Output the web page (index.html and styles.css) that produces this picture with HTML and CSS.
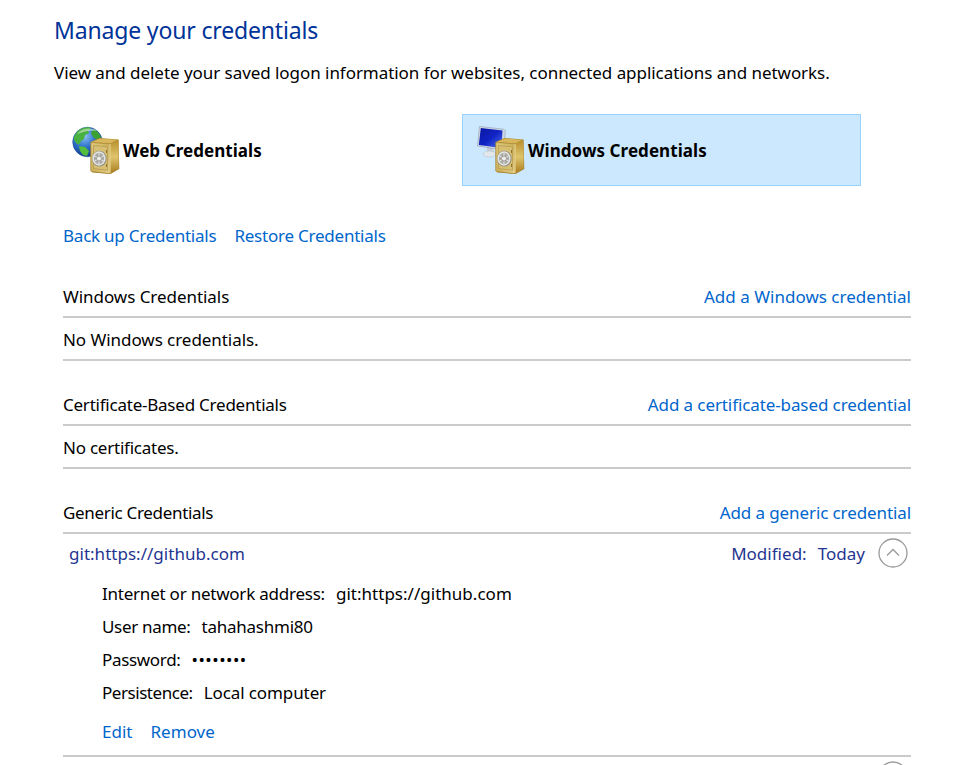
FILE: index.html
```
<!DOCTYPE html>
<html lang="en">
<head>
<meta charset="utf-8">
<title>Manage your credentials</title>
<link rel="stylesheet" href="styles.css">
</head>
<body>
<svg class="defs" width="0" height="0" aria-hidden="true">
  <defs>
    <linearGradient id="front" x1="0" y1="0" x2="1" y2="1"><stop offset="0" stop-color="#e0cc80"/><stop offset=".5" stop-color="#ceb35d"/><stop offset="1" stop-color="#e6d38d"/></linearGradient>
    <linearGradient id="side" x1="0" y1="0" x2="0" y2="1"><stop offset="0" stop-color="#b88f2c"/><stop offset=".5" stop-color="#dfc46c"/><stop offset="1" stop-color="#a87c1c"/></linearGradient>
    <radialGradient id="ocean" cx=".4" cy=".3" r=".7"><stop offset="0" stop-color="#8fc4f4"/><stop offset=".5" stop-color="#3275cf"/><stop offset="1" stop-color="#123a8c"/></radialGradient>
    <linearGradient id="screen" x1="0" y1="0" x2="1" y2="1"><stop offset="0" stop-color="#0a18a0"/><stop offset=".5" stop-color="#1022c4"/><stop offset="1" stop-color="#4d74ee"/></linearGradient>
    <symbol id="safe" viewBox="0 0 48 48">
      <path d="M18.500 16 27.500 12 46.500 13.500 47.300 43 38.500 48 20.500 46.500 18.500 44.500z" fill="#a5822f"/>
      <path d="M19.500 16 28 12.500 46 13.800 38 17.500z" fill="#d7b75a"/>
      <path d="M38 17.500 46.500 14.200 46.700 42.500 38 47.500z" fill="url(#side)"/>
      <path d="M19 16.500 37.800 18 37.800 47.500 19 45.300z" fill="url(#front)" stroke="#af8d3e" stroke-width=".6"/>
      <path d="M21.500 19.500 35.500 20.800 35.500 44.300 21.500 42.600z" fill="#d6bf72" stroke="#b4944a" stroke-width=".7"/>
      <path d="M38 18v29" stroke="#f1e09e"/>
      <ellipse cx="27.300" cy="32.700" rx="7.300" ry="7.900" fill="#8f8d84"/>
      <ellipse cx="27" cy="32.500" rx="5.900" ry="6.500" fill="#a9a9a5" stroke="#e4e4e0" stroke-width="1.500"/>
      <path d="M27 26.500v12M21.800 29.500 32.300 35.500M32.300 29.500 21.800 35.500" stroke="#dededc" stroke-width="1.200"/>
      <circle cx="27" cy="32.500" r="2.500" fill="#ececeb" stroke="#85837b" stroke-width=".7"/>
      <path d="M34.500 24v3M34.500 38v3" stroke="#8d7430"/>
    </symbol>
  </defs>
</svg>
<main class="page">
  <h1 class="title"><span>Manage your credentials</span></h1>
  <p class="intro"><span>View and delete your saved logon information for websites, connected applications and networks.</span></p>

  <nav class="vaults">
    <a class="vault">
      <svg class="vault-icon" viewBox="0 0 48 48">
        <circle cx="15.500" cy="16" r="14.800" fill="url(#ocean)" stroke="#28599d" stroke-width=".6"/>
        <path d="M2 11C4 6 7 3 11 2l6-1 2 2-3 2 1 2-4 2-1 4-3 2-2 4-3-2-2-3z" fill="#49b13f"/>
        <path d="M21 3c4 1 7 5 8 9l-4 2-4-3-2-4z" fill="#3ba133"/>
        <path d="M7 20l6 1 4 4-2 5-4-1-3-4z" fill="#55bd3c"/>
        <path d="M5 8c5-6 14-7 20-3-6-1-13 0-20 3z" fill="#fff" opacity=".45"/>
        <use href="#safe"/>
      </svg>
      <span>Web Credentials</span>
    </a>
    <a class="vault selected">
      <svg class="vault-icon" viewBox="0 0 48 48">
        <path d="M10 20h6l1 7h-7z" fill="#c4ccd5"/>
        <ellipse cx="12.500" cy="28" rx="6.500" ry="3" fill="#e2e7ec" stroke="#b4bdc7" stroke-width=".5"/>
        <path d="M2.500.500 26.500 3.200 28.300 4.500 27 23 24 23.500.500 20z" fill="#d3dae3" stroke="#8e9bb0" stroke-width=".6"/>
        <path d="M3.800 2 25.500 4.500 24.500 22 1.800 19z" fill="url(#screen)"/>
        <use href="#safe"/>
      </svg>
      <span>Windows Credentials</span>
    </a>
  </nav>

  <div class="content">
    <div class="links"><a class="tight">Back up Credentials</a><a class="tight">Restore Credentials</a></div>

    <section class="group">
      <header class="group-head"><span>Windows Credentials</span><a class="even">Add a Windows credential</a></header>
      <p class="empty"><span>No Windows credentials.</span></p>
    </section>
    <section class="group">
      <header class="group-head"><span class="tight">Certificate-Based Credentials</span><a class="snug">Add a certificate-based credential</a></header>
      <p class="empty"><span class="tight">No certificates.</span></p>
    </section>
    <section class="group">
      <header class="group-head"><span class="tighter">Generic Credentials</span><a class="snug">Add a generic credential</a></header>
      <div class="entry-head">
        <span class="entry-name even">git:https://github.com</span>
        <span class="even">Modified:</span><span class="today even">Today</span>
        <svg class="chevron" viewBox="0 0 30 30"><circle cx="15" cy="15" r="14"/><path d="M9 17.500 15 11.500 21 17.500"/></svg>
      </div>
      <div class="details">
        <div class="field"><span class="tight">Internet or network address:</span><span class="even">git:https://github.com</span></div>
        <div class="field"><span class="tighter">User name:</span><span class="tight">tahahashmi80</span></div>
        <div class="field"><span class="tighter">Password:</span><span class="dots">••••••••</span></div>
        <div class="field"><span class="tightest">Persistence:</span><span class="snug">Local computer</span></div>
        <div class="actions"><a class="even">Edit</a><a class="even">Remove</a></div>
      </div>
      <div class="next-entry"><svg class="chevron" viewBox="0 0 30 30"><circle cx="15" cy="15" r="14"/></svg></div>
    </section>
  </div>
</main>
</body>
</html>
```
FILE: styles.css
```
* { box-sizing: border-box; }

body {
  margin: 0;
  background: #fff;
  color: #000;
  font: 17px/24px "Noto Sans", "Open Sans", sans-serif;
  letter-spacing: -0.05px;
}

h1, p { margin: 0; }
a { color: #0066cc; white-space: nowrap; }
span { white-space: nowrap; }
.defs { position: absolute; }

.even { letter-spacing: 0.02px; }
.snug { letter-spacing: -0.1px; }
.tight { letter-spacing: -0.23px; }
.tighter { letter-spacing: -0.32px; }
.tightest { letter-spacing: -0.45px; }

.page {
  height: 765px;
  padding: 14px 0 0 54px;
  overflow: hidden;
}

.title {
  color: #003399;
  font-size: 23px;
  font-weight: 400;
  line-height: 32px;
  letter-spacing: -0.16px;
}

.intro { margin-top: 15px; }

.vaults {
  display: grid;
  grid-template-columns: 399px 399px;
  gap: 6px;
  margin: 29px 0 0 3px;
}

.vault {
  display: flex;
  align-items: center;
  gap: 3px;
  height: 72px;
  padding-left: 15px;
  color: #000;
  font-weight: 700;
  letter-spacing: 0.06px;
}

.vault span { padding-top: 2px; }

.vault.selected {
  padding-left: 14px;
  background: #cce8ff;
  border: 1px solid #99d1ff;
}

.vault-icon { width: 48px; height: 48px; }

.content { width: 848px; margin-left: 9px; }

.links { display: flex; gap: 18px; margin-top: 38px; height: 52px; }

.group { margin-bottom: 23px; }

.group-head {
  display: flex;
  justify-content: space-between;
  height: 42px;
  padding-top: 9px;
  border-bottom: 2px solid #cbcbcb;
}

.empty { height: 43px; padding-top: 10px; border-bottom: 2px solid #cbcbcb; }

.entry-head {
  display: flex;
  height: 42px;
  padding: 4px 3px 0 6px;
  color: #1f3591;
}
.entry-head span { padding-top: 4px; }
.entry-name { flex: 1; }
.today { margin-left: 11px; }

.chevron {
  width: 30px;
  height: 30px;
  margin-left: 13px;
  fill: none;
  stroke: #999;
  stroke-width: 1.3;
}

.details { height: 181px; padding: 6px 0 0 39px; border-bottom: 2px solid #cbcbcb; }
.field { display: flex; gap: 11px; height: 33px; }
.dots { letter-spacing: 0.5px; }
.actions { display: flex; gap: 18px; padding-top: 6px; }
.next-entry { display: flex; justify-content: flex-end; height: 8px; padding: 4px 3px 0 0; overflow: hidden; }
```
